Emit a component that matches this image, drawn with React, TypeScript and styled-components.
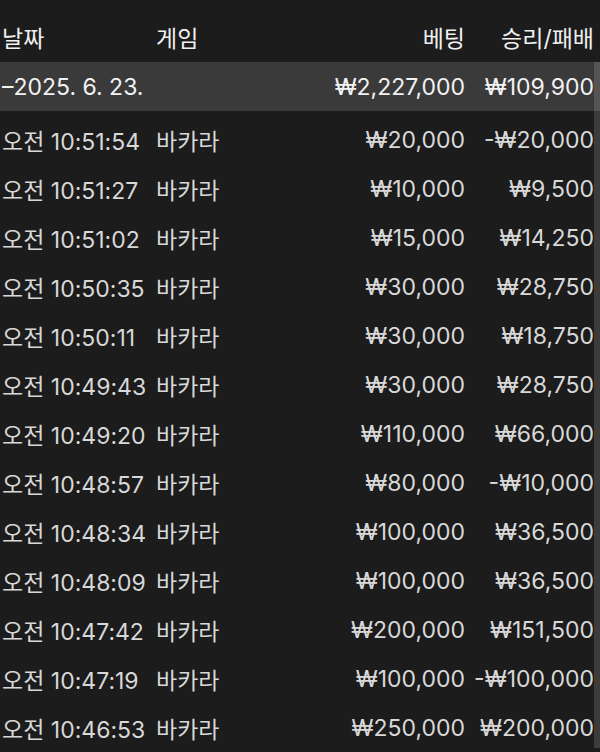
import React from "react";
import styled, { createGlobalStyle } from "styled-components";

const Global = createGlobalStyle`
  html, body { margin: 0; padding: 0; background: #1c1c1c; }
  body { width: 600px; height: 752px; overflow: hidden; }
`;

const Table = styled.div`
  width: 600px;
  height: 752px;
  background: #1c1c1c;
  font-family: Inter, "Noto Sans CJK KR", sans-serif;
  font-size: 23px;
  color: #d8d8d8;
  overflow: hidden;
`;

const Grid = styled.div<{ $h: number; $pt: number }>`
  display: grid;
  grid-template-columns: 154px 1fr 160px 129px;
  align-items: center;
  height: ${(p) => p.$h}px;
  box-sizing: border-box;
  padding: ${(p) => p.$pt}px 6px 0 2px;
  white-space: nowrap;
`;

const HeaderRow = styled(Grid)`
  color: #f0f0f0;
`;

const GroupRow = styled(Grid)`
  background: #3a3a3a;
  color: #f2f2f2;
`;

const DataRow = styled(Grid)``;

const Body = styled.div`
  position: relative;
`;

const Thumb = styled.div`
  position: absolute;
  top: 0;
  right: 0;
  bottom: 0;
  width: 6px;
  background: rgba(255, 255, 255, 0.14);
`;

const Cell = styled.div<{ $right?: boolean }>`
  text-align: ${(p) => (p.$right ? "right" : "left")};
`;

const rows: [string, string, string][] = [
  ["오전 10:51:54", "₩20,000", "-₩20,000"],
  ["오전 10:51:27", "₩10,000", "₩9,500"],
  ["오전 10:51:02", "₩15,000", "₩14,250"],
  ["오전 10:50:35", "₩30,000", "₩28,750"],
  ["오전 10:50:11", "₩30,000", "₩18,750"],
  ["오전 10:49:43", "₩30,000", "₩28,750"],
  ["오전 10:49:20", "₩110,000", "₩66,000"],
  ["오전 10:48:57", "₩80,000", "-₩10,000"],
  ["오전 10:48:34", "₩100,000", "₩36,500"],
  ["오전 10:48:09", "₩100,000", "₩36,500"],
  ["오전 10:47:42", "₩200,000", "₩151,500"],
  ["오전 10:47:19", "₩100,000", "-₩100,000"],
  ["오전 10:46:53", "₩250,000", "₩200,000"],
];

export default function App() {
  return (
    <Table>
      <Global />
      <HeaderRow $h={62} $pt={11}>
        <Cell>날짜</Cell>
        <Cell>게임</Cell>
        <Cell $right>베팅</Cell>
        <Cell $right>승리/패배</Cell>
      </HeaderRow>
      <Body>
        <Thumb />
        <GroupRow $h={49} $pt={0}>
          <Cell>–2025. 6. 23.</Cell>
          <Cell />
          <Cell $right>₩2,227,000</Cell>
          <Cell $right>₩109,900</Cell>
        </GroupRow>
        {rows.map(([t, b, w]) => (
          <DataRow key={t} $h={49} $pt={9}>
            <Cell>{t}</Cell>
            <Cell>바카라</Cell>
            <Cell $right>{b}</Cell>
            <Cell $right>{w}</Cell>
          </DataRow>
        ))}
      </Body>
    </Table>
  );
}
